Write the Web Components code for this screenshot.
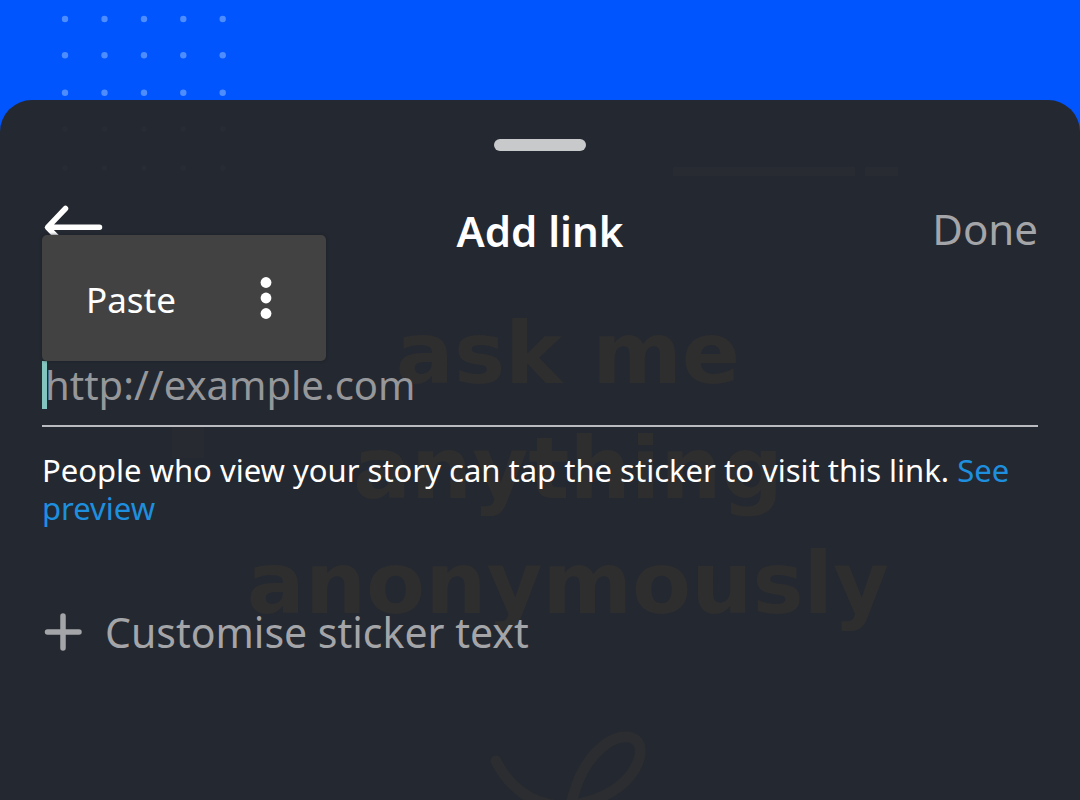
<!DOCTYPE html>
<html lang="en">
<head>
<meta charset="utf-8">
<meta name="viewport" content="width=device-width, initial-scale=1">
<title>Add link</title>
<style>
  html, body { margin: 0; }
  body { background: #0055ff; font-family: "Noto Sans", "Open Sans", sans-serif; color: #fff; }
</style>
</head>
<body>
<story-editor>
  <link-sheet>
    <story-ghost slot="behind"></story-ghost>
    <sheet-header>Add link</sheet-header>
    <link-field placeholder="http://example.com">
      <paste-menu slot="menu"></paste-menu>
    </link-field>
    <link-hint href="#preview" action="See preview">People who view your story can tap the sticker to visit this link.</link-hint>
    <add-row>Customise sticker text</add-row>
  </link-sheet>
</story-editor>

<script>
  const define = (name, html, setup) => {
    const template = document.createElement('template');
    template.innerHTML = html;
    customElements.define(name, class extends HTMLElement {
      constructor() {
        super();
        this.attachShadow({ mode: 'open' }).append(template.content.cloneNode(true));
      }
      connectedCallback() {
        if (setup) setup(this, this.shadowRoot);
      }
    });
  };

  // The story behind the sheet: blue, with a grid of dots at the top left.
  define('story-editor', `
    <style>
      :host { display: flex; flex-direction: column; min-height: 100vh; background: #0055ff; overflow: hidden; }
      .story { height: 100px; flex: none; }
      svg { display: block; width: 240px; height: 100px; }
      ::slotted(*) { flex: 1; }
    </style>
    <div class="story">
      <svg viewBox="0 0 240 100" fill="#4d8dff" aria-hidden="true"></svg>
    </div>
    <slot></slot>
  `, (host, root) => {
    const xs = [65, 104.5, 144, 183.3, 222.7];
    const ys = [19, 55.3, 92.7];
    root.querySelector('svg').innerHTML =
      ys.map(y => xs.map(x => `<circle cx="${x}" cy="${y}" r="3.2"/>`).join('')).join('');
  });

  define('link-sheet', `
    <style>
      :host { display: block; position: relative; background: #242830; border-radius: 32px 32px 0 0; box-sizing: border-box; padding: 39px 42px 0; overflow: hidden; }
      .handle { width: 92px; height: 12px; border-radius: 6px; background: #c8c9cb; margin: 0 auto; }
      .behind { position: absolute; inset: 0; }
      .content { position: relative; }
    </style>
    <div class="behind"><slot name="behind"></slot></div>
    <div class="content">
      <div class="handle"></div>
      <slot></slot>
    </div>
  `);

  // Faint trace of the story that shows through the sheet.
  define('story-ghost', `
    <style>
      :host { display: block; position: relative; height: 100%; overflow: hidden; }
      p { margin: 0; padding: 196px 0 0 56px; text-align: center; font: bold 86px/115px "DejaVu Sans", sans-serif; color: #2e2e2f; }
      svg { position: absolute; top: 0; left: 50%; margin-left: -540px; width: 1080px; height: 700px; }
    </style>
    <svg viewBox="0 0 1080 700" aria-hidden="true">
      <g class="dots" fill="#272b33"></g>
      <path d="M673 67h182v9H673zM865 67h33v9h-33z" fill="#292b32"/>
      <path d="M172 327h32v31h-32z" fill="#272a31"/>
      <path d="M496 661C510 689 534 705 562 706C600 704 634 684 640 655C643 633 619 631 601 648C585 662 577 680 571 704" fill="none" stroke="#2c2d30" stroke-width="11" stroke-linecap="round"/>
    </svg>
    <p aria-hidden="true">ask me<br>anything<br>anonymously</p>
  `, (host, root) => {
    const xs = [65, 104.5, 144, 183.3, 222.7];
    root.querySelector('.dots').innerHTML =
      [29, 68].map(y => xs.map(x => `<circle cx="${x}" cy="${y}" r="3"/>`).join('')).join('');
  });

  define('sheet-header', `
    <style>
      :host { display: grid; grid-template-columns: 1fr auto 1fr; align-items: center; height: 64px; margin-top: 48px; }
      h1 { margin: 0; font-size: 42px; line-height: 64px; font-weight: 600; }
      button { font: inherit; background: none; border: 0; padding: 0; cursor: pointer; }
      .back { justify-self: start; height: 64px; }
      .back svg { display: block; width: 64px; height: 64px; }
      .done { justify-self: end; font-size: 42px; line-height: 60px; padding-bottom: 4px; color: #a4a5a8; }
    </style>
    <button class="back" aria-label="Back">
      <svg viewBox="0 0 64 64" fill="none" stroke="#fff" stroke-width="5.5" stroke-linecap="round" stroke-linejoin="round"><path d="M57.500 28.300H6M23.500 9.500L5.500 28.300L23.500 47"/></svg>
    </button>
    <h1><slot></slot></h1>
    <button class="done">Done</button>
  `);

  define('link-field', `
    <style>
      :host { display: block; position: relative; margin-top: 98px; border-bottom: 2px solid #b9bbc0; }
      input { display: block; width: 100%; height: 64px; box-sizing: border-box; margin: 0; padding: 0 0 18px 3px; border: 0; outline: 0; background: none; font: inherit; font-size: 40px; color: #fff; }
      input::placeholder { color: #96979a; opacity: 1; }
      .caret { position: absolute; left: 0; top: 0; width: 5px; height: 48px; background: #84c4be; }
      .menu { position: absolute; left: 0; bottom: 100%; }
    </style>
    <div class="caret"></div>
    <input type="url" aria-label="Link address">
    <div class="menu"><slot name="menu"></slot></div>
  `, (host, root) => {
    root.querySelector('input').placeholder = host.getAttribute('placeholder');
  });

  define('paste-menu', `
    <style>
      :host { display: flex; align-items: center; box-sizing: border-box; height: 126px; padding: 0 32px 0 44px; gap: 62px; border-radius: 5px; background: #424242; box-shadow: 0 0 3px #1c1f25; }
      button { font: inherit; font-size: 35px; line-height: 48px; color: #fff; background: none; border: 0; padding: 0; cursor: pointer; }
      .paste { padding-top: 4px; }
      svg { display: block; width: 56px; height: 56px; }
    </style>
    <button class="paste">Paste</button>
    <button aria-label="More options">
      <svg viewBox="0 0 56 56" fill="#fff"><circle cx="28" cy="12.500" r="5.400"/><circle cx="28" cy="28" r="5.400"/><circle cx="28" cy="43.500" r="5.400"/></svg>
    </button>
  `);

  define('link-hint', `
    <style>
      :host { display: block; margin-top: 24px; font-size: 31px; line-height: 38px; }
      p { margin: 0; }
      a { color: #1e8fdf; text-decoration: none; }
    </style>
    <p><slot></slot> <a></a></p>
  `, (host, root) => {
    const link = root.querySelector('a');
    link.href = host.getAttribute('href');
    link.textContent = host.getAttribute('action');
  });

  define('add-row', `
    <style>
      :host { display: block; margin-top: 75px; }
      button { display: flex; align-items: center; gap: 21px; font: inherit; font-size: 41px; line-height: 60px; color: #a4a5a8; background: none; border: 0; padding: 0; cursor: pointer; }
      svg { display: block; width: 42px; height: 42px; }
    </style>
    <button>
      <svg viewBox="0 0 42 42" fill="none" stroke="#a4a5a8" stroke-width="5.500" stroke-linecap="round" aria-hidden="true"><path d="M21 5V37M5.500 21H37"/></svg>
      <span><slot></slot></span>
    </button>
  `);
</script>
</body>
</html>
